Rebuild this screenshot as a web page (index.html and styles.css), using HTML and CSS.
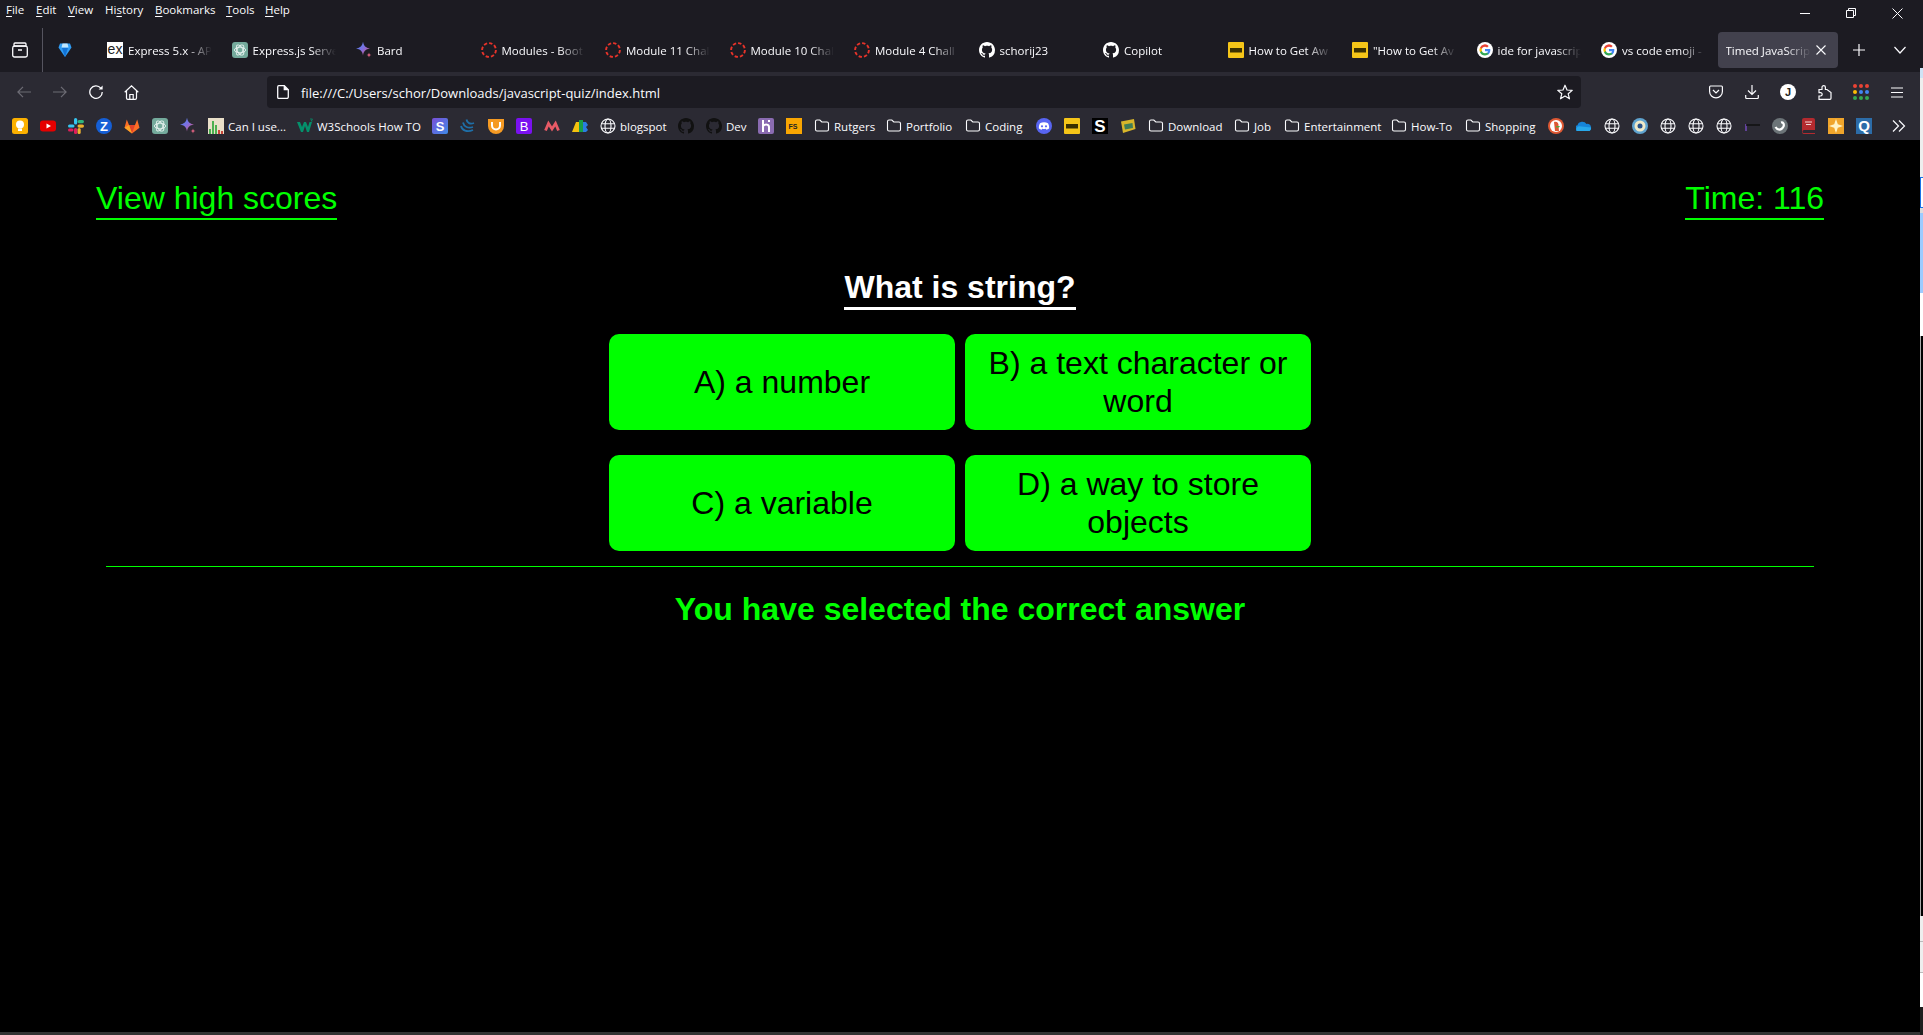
FILE: index.html
```html
<!DOCTYPE html>
<html lang="en">
<head>
<meta charset="utf-8">
<title>Timed JavaScript Quiz</title>
<link rel="stylesheet" href="styles.css">
</head>
<body>
<svg class="defs" width="0" height="0" aria-hidden="true">
  <defs>
    <linearGradient id="bardg" x1="0" y1="0" x2="1" y2="1"><stop offset="0" stop-color="#3f8df5"/><stop offset=".5" stop-color="#7f6fe0"/><stop offset="1" stop-color="#ef4f63"/></linearGradient>
    <linearGradient id="sg" x1="0" y1="0" x2="1" y2="1"><stop offset="0" stop-color="#7a4fd8"/><stop offset="1" stop-color="#3f8be8"/></linearGradient>
    <symbol id="gpt" viewBox="0 0 16 16"><rect width="16" height="16" rx="3" fill="#74aa9c"/><g fill="none" stroke="#e8f3f0" stroke-width=".9"><ellipse cx="8" cy="8" rx="5.600" ry="2.800" transform="rotate(60 8 8)"/><ellipse cx="8" cy="8" rx="5.600" ry="2.800" transform="rotate(-60 8 8)"/><ellipse cx="8" cy="8" rx="5.600" ry="2.800"/></g></symbol>
    <symbol id="bard" viewBox="0 0 16 16"><path d="M7 -.5C7.600 3.800 9.300 5.600 14 6.500 9.300 7.400 7.600 9.200 7 13.500 6.400 9.200 4.700 7.400 0 6.500 4.700 5.600 6.400 3.800 7 -.5Z" fill="url(#bardg)"/><path d="M13 10.500c.3 1.500 1 2.200 2.500 2.500-1.500.3-2.200 1-2.500 2.500-.3-1.500-1-2.200-2.500-2.500 1.500-.3 2.200-1 2.500-2.500Z" fill="#d9607e"/></symbol>
    <symbol id="spin" viewBox="0 0 16 16"><circle cx="8" cy="8" r="6.900" fill="none" stroke="#e5332a" stroke-width="1.900" stroke-dasharray="3.400 2"/></symbol>
    <symbol id="gh" viewBox="0 0 16 16"><path fill-rule="evenodd" d="M8 0C3.580 0 0 3.580 0 8c0 3.540 2.290 6.530 5.470 7.590.4.07.55-.17.55-.38 0-.19-.01-.82-.01-1.490-2.010.37-2.530-.49-2.690-.94-.09-.23-.48-.94-.82-1.130-.28-.15-.68-.52-.01-.53.63-.01 1.080.58 1.230.82.72 1.210 1.870.87 2.330.66.07-.52.28-.87.51-1.070-1.780-.2-3.640-.89-3.640-3.950 0-.87.31-1.590.82-2.150-.08-.2-.36-1.020.08-2.120 0 0 .67-.21 2.200.82.64-.18 1.320-.27 2-.27.68 0 1.360.09 2 .27 1.530-1.040 2.200-.82 2.200-.82.44 1.100.16 1.920.08 2.120.51.56.82 1.270.82 2.150 0 3.070-1.870 3.750-3.650 3.950.29.25.54.73.54 1.480 0 1.070-.01 1.930-.01 2.200 0 .21.15.46.55.38A8.013 8.013 0 0 0 16 8c0-4.420-3.580-8-8-8Z"/></symbol>
    <symbol id="imdb" viewBox="0 0 16 16"><rect width="16" height="16" rx="1" fill="#f5c518"/><rect x="2" y="6" width="12" height="4.500" fill="#3a3000"/></symbol>
    <symbol id="goog" viewBox="0 0 16 16"><circle cx="8" cy="8" r="8" fill="#fff"/><path d="M13.300 8.100c0-.4 0-.8-.1-1.200H8v2.300h3a2.600 2.600 0 0 1-1.100 1.700v1.400h1.800c1-1 1.600-2.400 1.600-4.200Z" fill="#4285f4"/><path d="M8 13.500c1.500 0 2.700-.5 3.700-1.400l-1.800-1.400c-.5.3-1.100.5-1.900.5-1.400 0-2.700-1-3.100-2.300H3v1.400a5.500 5.500 0 0 0 5 3.200Z" fill="#34a853"/><path d="M4.900 8.900a3.300 3.300 0 0 1 0-2.100V5.400H3a5.500 5.500 0 0 0 0 4.900l1.900-1.400Z" fill="#fbbc05"/><path d="M8 4.700c.8 0 1.500.3 2.100.8l1.600-1.600A5.500 5.500 0 0 0 3 5.400l1.900 1.400C5.300 5.600 6.600 4.700 8 4.700Z" fill="#ea4335"/></symbol>
    <symbol id="globe" viewBox="0 0 16 16"><g fill="none" stroke="#fbfbfe" stroke-width="1.100"><circle cx="8" cy="8" r="7"/><ellipse cx="8" cy="8" rx="3" ry="7"/><path d="M1.300 5.800h13.400M1.300 10.200h13.400"/></g></symbol>
    <symbol id="folder" viewBox="0 0 16 16"><path d="M1.500 3.500a1.500 1.500 0 0 1 1.500-1.500h2.800l2 2H13a1.500 1.500 0 0 1 1.500 1.500v6A1.500 1.500 0 0 1 13 13H3a1.500 1.500 0 0 1-1.500-1.500Z" fill="none" stroke="#fbfbfe" stroke-width="1.100"/></symbol>
  </defs>
</svg>

<div class="screen">
  <div class="window">
    <nav class="menubar">
      <span class="menu w-file"><u>F</u>ile</span>
      <span class="menu w-edit"><u>E</u>dit</span>
      <span class="menu w-view"><u>V</u>iew</span>
      <span class="menu w-hist">Hi<u>s</u>tory</span>
      <span class="menu w-book"><u>B</u>ookmarks</span>
      <span class="menu w-tools"><u>T</u>ools</span>
      <span class="menu w-help"><u>H</u>elp</span>
      <div class="winctl">
        <span class="winbtn"><svg width="10" height="10" viewBox="0 0 10 10"><path d="M0 5.500h10" stroke="#fbfbfe"/></svg></span>
        <span class="winbtn"><svg width="10" height="10" viewBox="0 0 10 10" fill="none" stroke="#fbfbfe"><path d="M.5 2.500h7v7h-7zM2.500 2.500v-2h7v7h-2"/></svg></span>
        <span class="winbtn"><svg width="11" height="11" viewBox="0 0 11 11"><path d="M.5.500l10 10M10.500.500l-10 10" stroke="#fbfbfe"/></svg></span>
      </div>
    </nav>

    <div class="tabstrip">
      <span class="fview"><svg width="16" height="16" viewBox="0 0 16 16" fill="none" stroke="#fbfbfe" stroke-width="1.300"><path d="M3 1h10a1 1 0 0 1 1 1v2H2V2a1 1 0 0 1 1-1Z"/><rect x=".7" y="4.200" width="14.600" height="10.800" rx="1.800"/><path d="M6 8h4" stroke-width="1.500"/></svg></span>
      <span class="pinned"><svg width="16" height="16" viewBox="0 0 16 16"><path d="M3 1.500h10L14.500 5.500 8 15 1.500 5.500Z" fill="#2f9df5"/><path d="M5.500 1.500h5L11.500 5.500h-7Z" fill="#bfe6ff"/><path d="M8 15 5 6h6Z" fill="#1272d6"/></svg></span>
      <div class="tab"><svg class="ico" viewBox="0 0 16 16"><rect width="16" height="16" fill="#fff"/><text x="8" y="12" class="t-ex">ex</text></svg><span class="tabtext">Express 5.x - API</span></div>
      <div class="tab"><svg class="ico"><use href="#gpt"/></svg><span class="tabtext">Express.js Serve</span></div>
      <div class="tab"><svg class="ico"><use href="#bard"/></svg><span class="tabtext">Bard</span></div>
      <div class="tab"><svg class="ico"><use href="#spin"/></svg><span class="tabtext">Modules - Boot</span></div>
      <div class="tab"><svg class="ico"><use href="#spin"/></svg><span class="tabtext">Module 11 Chal</span></div>
      <div class="tab"><svg class="ico"><use href="#spin"/></svg><span class="tabtext">Module 10 Chal</span></div>
      <div class="tab"><svg class="ico"><use href="#spin"/></svg><span class="tabtext">Module 4 Chall</span></div>
      <div class="tab"><svg class="ico gh-w"><use href="#gh"/></svg><span class="tabtext">schorij23</span></div>
      <div class="tab"><svg class="ico gh-w"><use href="#gh"/></svg><span class="tabtext">Copilot</span></div>
      <div class="tab"><svg class="ico"><use href="#imdb"/></svg><span class="tabtext">How to Get Aw</span></div>
      <div class="tab"><svg class="ico"><use href="#imdb"/></svg><span class="tabtext">"How to Get Av</span></div>
      <div class="tab"><svg class="ico"><use href="#goog"/></svg><span class="tabtext">ide for javascrip</span></div>
      <div class="tab"><svg class="ico"><use href="#goog"/></svg><span class="tabtext">vs code emoji -</span></div>
      <div class="tab tab-active"><span class="tabtext">Timed JavaScript</span><svg class="tabclose" width="10" height="10" viewBox="0 0 10 10"><path d="M.5.500l9 9M9.500.500l-9 9" stroke="#fbfbfe" stroke-width="1.100"/></svg></div>
      <svg class="newtab" width="12" height="12" viewBox="0 0 12 12"><path d="M6 0v12M0 6h12" stroke="#fbfbfe" stroke-width="1.200"/></svg>
      <svg class="alltabs" width="12" height="8" viewBox="0 0 12 8"><path d="M.5 1 6 7l5.500-6" fill="none" stroke="#fbfbfe" stroke-width="1.200"/></svg>
    </div>

    <div class="toolbar">
      <svg class="tb tb-back" width="14" height="12" viewBox="0 0 14 12" fill="none" stroke="#6d6c75" stroke-width="1.200"><path d="M14 6H1M6 .8.900 6 6 11.200"/></svg>
      <svg class="tb tb-fwd" width="14" height="12" viewBox="0 0 14 12" fill="none" stroke="#6d6c75" stroke-width="1.200"><path d="M0 6h13M8 .8 13.100 6 8 11.200"/></svg>
      <svg class="tb tb-reload" width="14" height="14" viewBox="0 0 14 14" fill="none" stroke="#fbfbfe" stroke-width="1.300"><path d="M11.800 3.200A6.200 6.200 0 1 0 13.200 7"/><path d="M13.600.6v4h-4Z" fill="#fbfbfe" stroke="none"/></svg>
      <svg class="tb tb-home" width="15" height="15" viewBox="0 0 15 15" fill="none" stroke="#fbfbfe" stroke-width="1.200"><path d="M.7 7.200 7.500.8l6.800 6.400M2.500 6v7a1.300 1.300 0 0 0 1.300 1.300h7.400a1.300 1.300 0 0 0 1.300-1.300V6M5.800 14.200V9.500h3.400v4.700"/></svg>
      <div class="urlbar">
        <svg class="urlicon" width="12" height="14" viewBox="0 0 12 14" fill="none" stroke="#fbfbfe" stroke-width="1.300"><path d="M1.800.7h5.500l4 4v7.400a1.300 1.300 0 0 1-1.300 1.300H1.800A1.200 1.200 0 0 1 .7 12.100V1.900A1.200 1.200 0 0 1 1.800.7Z"/><path d="M7.300.7v4h4" fill="#fbfbfe"/></svg>
        <span class="url">file:///C:/Users/schor/Downloads/javascript-quiz/index.html</span>
        <svg class="star" width="16" height="16" viewBox="0 0 16 16"><path d="M8 1.200 10 6l5.200.4-4 3.400 1.300 5L8 12.100 3.500 14.800l1.300-5-4-3.400L6 6Z" fill="none" stroke="#fbfbfe" stroke-width="1.200" stroke-linejoin="round"/></svg>
      </div>
      <div class="tbright">
        <svg width="14" height="14" viewBox="0 0 14 14" fill="none" stroke="#fbfbfe" stroke-width="1.200"><path d="M1.500 1h11a1 1 0 0 1 .9 1v4.500a6.400 6.400 0 0 1-12.800 0V2a1 1 0 0 1 .9-1Z"/><path d="M4 5l3 3 3-3"/></svg>
        <svg width="14" height="14" viewBox="0 0 14 14" fill="none" stroke="#fbfbfe" stroke-width="1.200"><path d="M7 0v9.500M3 5.500l4 4 4-4M.7 10v2.500a1 1 0 0 0 1 1h10.600a1 1 0 0 0 1-1V10"/></svg>
        <svg width="16" height="16" viewBox="0 0 16 16"><circle cx="8" cy="8" r="8" fill="#fff"/><text x="8" y="12" class="t-j">J</text></svg>
        <svg width="14" height="15" viewBox="0 0 14 15" fill="none" stroke="#fbfbfe" stroke-width="1.200"><path d="M1 14.300V11h1.500a1.700 1.700 0 0 0 0-3.400H1V4.500h3V2.300a1.700 1.700 0 0 1 3.400 0v2.200H9l4 3v5.800a1 1 0 0 1-1 1Z"/></svg>
        <svg width="16" height="16" viewBox="0 0 16 16"><g fill="#ea4335"><circle cx="2" cy="2" r="2"/><circle cx="8" cy="2" r="2"/><circle cx="14" cy="2" r="2"/></g><circle cx="2" cy="8" r="2" fill="#fbbc05"/><circle cx="8" cy="8" r="2" fill="#4285f4"/><circle cx="14" cy="8" r="2" fill="#4285f4"/><g fill="#34a853"><circle cx="2" cy="14" r="2"/><circle cx="8" cy="14" r="2"/><circle cx="14" cy="14" r="2"/></g></svg>
        <svg width="12" height="11" viewBox="0 0 12 11" stroke="#fbfbfe" stroke-width="1.200"><path d="M0 1h12M0 5.500h12M0 10h12"/></svg>
      </div>
    </div>

    <div class="bookmarks">
      <svg class="ico" viewBox="0 0 16 16"><rect width="16" height="16" rx="2.500" fill="#fbb000"/><circle cx="8" cy="6.500" r="4" fill="#fff"/><rect x="6" y="10.500" width="4" height="2.500" fill="#fff"/></svg>
      <svg class="ico" viewBox="0 0 16 16"><rect y="2.500" width="16" height="11" rx="3" fill="#e60000"/><path d="M6.500 5.500v5L11 8Z" fill="#fff"/></svg>
      <svg class="ico" viewBox="0 0 16 16"><rect x="6" y="0" width="3.200" height="6.500" rx="1.600" fill="#36c5f0"/><rect y="6.500" width="6.500" height="3" rx="1.500" fill="#36c5f0"/><rect x="9.500" y="2" width="6.500" height="3.200" rx="1.600" fill="#2eb67d"/><rect x="9.500" y="6.500" width="6.500" height="3.200" rx="1.600" fill="#ecb22e"/><rect x="9.500" y="10" width="3.200" height="6" rx="1.600" fill="#ecb22e"/><rect x="6" y="10" width="3.200" height="6" rx="1.600" fill="#e01e5a"/><rect y="10.500" width="5.500" height="3" rx="1.500" fill="#e01e5a"/></svg>
      <svg class="ico" viewBox="0 0 16 16"><circle cx="8" cy="8" r="8" fill="#155fd6"/><text x="8" y="12.500" class="t-z">Z</text></svg>
      <svg class="ico" viewBox="0 0 16 16"><path d="M8 15.500 .5 9.800 2.800 1.500 5 7h6l2.200-5.500 2.300 8.300Z" fill="#fc6d26"/><path d="M8 15.500 5 7h6Z" fill="#e24329"/><path d="M.5 9.800 5 7l3 8.500Z" fill="#fca326"/></svg>
      <svg class="ico"><use href="#gpt"/></svg>
      <svg class="ico"><use href="#bard"/></svg>
      <span class="bm w-caniuse"><svg class="ico" viewBox="0 0 16 16"><rect width="16" height="16" fill="#e9dfc9"/><path d="M1 16v-5h2v5zM4 16V3h2v13zM7 16V7h2v9z" fill="#4caf50"/><path d="M10 16v-4h2v4zM13 16v-3h2v3z" fill="#c8453a"/></svg><span>Can I use...</span></span>
      <span class="bm w-w3"><svg class="ico" viewBox="0 0 16 16"><path d="M0 4h3l2 5 2-5h2l2 5 1.500-5H15L12 14h-2L8 8l-2 6H4Z" fill="#04906b"/><path d="M13 1h2.500L14 3h1.500" fill="none" stroke="#04906b" stroke-width=".8"/></svg><span>W3Schools How TO</span></span>
      <svg class="ico" viewBox="0 0 16 16"><rect width="16" height="16" rx="2" fill="url(#sg)"/><text x="8" y="12.500" class="t-z">S</text></svg>
      <svg class="ico" viewBox="0 0 16 16" fill="none" stroke="#1f6fa8" stroke-width="1.800"><path d="M1 8c1 4.500 6 6.500 12 4M3 4.500c1 4.500 5 6 10 4.500M6.500 1.500C7 5 10 6.500 14 5"/></svg>
      <svg class="ico" viewBox="0 0 16 16"><path d="M0 1h16v7a8 8 0 0 1-16 0Z" fill="#f59a23"/><path d="M4 4v3.500a4 4 0 0 0 8 0V4" fill="none" stroke="#fff" stroke-width="2"/></svg>
      <svg class="ico" viewBox="0 0 16 16"><rect width="16" height="16" rx="2" fill="#7a11f0"/><text x="8" y="12.500" class="t-b">B</text></svg>
      <svg class="ico" viewBox="0 0 16 16"><path d="M1.500 12.500 4.500 5.500 8 11 11.500 5.500 14.500 12.500" fill="none" stroke="#e85a66" stroke-width="2.800"/></svg>
      <svg class="ico" viewBox="0 0 16 16"><path d="M0 14 4 4h3v10Z" fill="#f4c20d"/><rect x="7" y="2" width="4" height="12" fill="#1a9e46"/><path d="M11 4h3l2 3-2 2 2 3-2 2h-3Z" fill="#2a7de1"/></svg>
      <span class="bm w-blog"><svg class="ico"><use href="#globe"/></svg><span>blogspot</span></span>
      <svg class="ico gh-d"><use href="#gh"/></svg>
      <span class="bm w-dev"><svg class="ico gh-d"><use href="#gh"/></svg><span>Dev</span></span>
      <svg class="ico" viewBox="0 0 16 16"><rect width="16" height="16" rx="2" fill="#8a6bb1"/><path d="M5 2v12M5 8c2-2 6-2 6 1v5M11 2v2" fill="none" stroke="#fff" stroke-width="2"/></svg>
      <svg class="ico" viewBox="0 0 16 16"><rect width="16" height="16" fill="#f9a602"/><text x="7" y="11" class="t-fs">FS</text></svg>
      <span class="bm w-rut"><svg class="ico"><use href="#folder"/></svg><span>Rutgers</span></span>
      <span class="bm w-port"><svg class="ico"><use href="#folder"/></svg><span>Portfolio</span></span>
      <span class="bm w-cod"><svg class="ico"><use href="#folder"/></svg><span>Coding</span></span>
      <svg class="ico" viewBox="0 0 16 16"><circle cx="8" cy="8" r="8" fill="#5865f2"/><path d="M4 5.200c2.600-1.200 5.400-1.200 8 0 .9 1.700 1.300 3.500 1.100 5.300-1 .7-1.900 1-2.700 1.200l-.6-1c-1.200.3-2.400.3-3.600 0l-.6 1c-.9-.2-1.800-.5-2.700-1.200C2.700 8.700 3.100 6.900 4 5.200Z" fill="#fff"/><circle cx="6" cy="8.300" r="1.100" fill="#5865f2"/><circle cx="10" cy="8.300" r="1.100" fill="#5865f2"/></svg>
      <svg class="ico"><use href="#imdb"/></svg>
      <svg class="ico" viewBox="0 0 16 16"><rect width="16" height="16" fill="#000"/><text x="8" y="13.500" class="t-bs">S</text></svg>
      <svg class="ico" viewBox="0 0 16 16"><path d="M1 3.500 14 1l1.500 10L3 15Z" fill="#d8b62a"/><path d="M4 6.500 12.500 5l.5 5L5 11.500Z" fill="#3f7d58"/></svg>
      <span class="bm w-down"><svg class="ico"><use href="#folder"/></svg><span>Download</span></span>
      <span class="bm w-job"><svg class="ico"><use href="#folder"/></svg><span>Job</span></span>
      <span class="bm w-ent"><svg class="ico"><use href="#folder"/></svg><span>Entertainment</span></span>
      <span class="bm w-how"><svg class="ico"><use href="#folder"/></svg><span>How-To</span></span>
      <span class="bm w-shop"><svg class="ico"><use href="#folder"/></svg><span>Shopping</span></span>
      <svg class="ico" viewBox="0 0 16 16"><circle cx="8" cy="8" r="8" fill="#de5833"/><circle cx="8" cy="8" r="6" fill="#fff"/><path d="M6 4c3-1 5 1 4.500 4l.5 5H7Z" fill="#de5833"/><path d="M8 8h4l-1 1.500H8Z" fill="#5ca33b"/></svg>
      <svg class="ico" viewBox="0 0 16 16"><path d="M1 13a3 3 0 0 1 .5-5.800A5 5 0 0 1 10.500 6 3.500 3.500 0 0 1 15 9.500 3.500 3.500 0 0 1 13.500 13Z" fill="#1684d8"/><path d="M1 13a3 3 0 0 1 2-4.800L15 9.500A3.500 3.500 0 0 1 13.500 13Z" fill="#28a8ea"/></svg>
      <svg class="ico"><use href="#globe"/></svg>
      <svg class="ico" viewBox="0 0 16 16"><circle cx="8" cy="8" r="8" fill="#5fa3cf"/><circle cx="8" cy="8" r="5.500" fill="#efe9c8"/><circle cx="8" cy="8" r="2.500" fill="#28528a"/></svg>
      <svg class="ico"><use href="#globe"/></svg>
      <svg class="ico"><use href="#globe"/></svg>
      <svg class="ico"><use href="#globe"/></svg>
      <svg class="ico" viewBox="0 0 16 16"><path d="M2 6v7" stroke="#7d4fd0" stroke-width="1.300"/><path d="M2 7h14" stroke="#111" stroke-width="1.500"/></svg>
      <svg class="ico" viewBox="0 0 16 16"><circle cx="8" cy="8" r="8" fill="#6c7478"/><path d="M3.500 9c2 3.500 6 3.500 8-.5C12.500 6 11 4 9 4.500" fill="none" stroke="#fff" stroke-width="2.200"/></svg>
      <svg class="ico" viewBox="0 0 16 16"><path d="M2 2a2 2 0 0 1 2-2h9a2 2 0 0 1 2 2v10H4a1.500 1.500 0 0 0 0 3h11v1H3.500A2 2 0 0 1 2 14Z" fill="#b32a2f"/><path d="M5 4h7M6 6.500h5" stroke="#f1d6d6" stroke-width="1.100"/></svg>
      <svg class="ico" viewBox="0 0 16 16"><rect width="16" height="16" fill="#f0a52b"/><path d="M8 1l1.800 5.200L15 8l-5.200 1.800L8 15 6.200 9.800 1 8l5.200-1.800Z" fill="#fff3c4"/></svg>
      <svg class="ico" viewBox="0 0 16 16"><rect width="16" height="16" fill="#2c6ca8"/><text x="8" y="12.800" class="t-q">Q</text></svg>
      <svg class="more" width="14" height="12" viewBox="0 0 14 12" fill="none" stroke="#fbfbfe" stroke-width="1.200"><path d="M1 .5 6.500 6 1 11.500M7 .5 12.500 6 7 11.500"/></svg>
    </div>

    <main class="page">
      <header class="topline">
        <a class="toplink">View high scores</a>
        <a class="toplink">Time: 116</a>
      </header>
      <section class="quiz">
        <h1 class="question">What is string?</h1>
        <div class="answers">
          <button class="answer">A) a number</button>
          <button class="answer">B) a text character or word</button>
          <button class="answer">C) a variable</button>
          <button class="answer">D) a way to store objects</button>
        </div>
        <div class="rule"></div>
        <p class="result">You have selected the correct answer</p>
      </section>
    </main>
  </div>

  <aside class="edge">
    <div class="e-top"></div>
    <div class="e-tint"></div>
    <div class="e-light"></div>
    <div class="e-blue"></div>
    <div class="e-gap"></div>
    <div class="e-sky"></div>
    <div class="e-white"></div>
    <div class="e-black"></div>
    <div class="e-row1"></div>
    <div class="e-row2"></div>
    <div class="e-white2"></div>
    <div class="e-bottom"></div>
  </aside>
</div>
</body>
</html>
```

FILE: styles.css
```css
* { box-sizing: border-box; }
html, body { margin: 0; height: 100%; overflow: hidden; background: #000; }
body { font-family: "Open Sans", "Liberation Sans", sans-serif; color: #fbfbfe; }
.defs { position: absolute; }
.screen { display: flex; height: 1035px; width: 1923px; }
.window { width: 1920px; display: flex; flex-direction: column; flex: none; }

/* menu bar */
.menubar { height: 28px; background: #1c1b22; display: flex; align-items: flex-start; padding: 1px 0 0 6px; gap: 12px; font-size: 11.5px; line-height: 17px; flex: none; }
.menu { display: block; }
.menu u { text-underline-offset: 2px; text-decoration-thickness: 1px; }
.w-file { width: 18px; } .w-edit { width: 20px; } .w-view { width: 25px; } .w-hist { width: 38px; }
.w-book { width: 59px; } .w-tools { width: 27px; } .w-help { width: 25px; }
.winctl { margin-left: auto; display: flex; margin-top: -2px; }
.winbtn { width: 46px; height: 28px; display: flex; align-items: center; justify-content: center; }

/* tabs */
.tabstrip { height: 44px; background: #1c1b22; display: flex; align-items: center; flex: none; position: relative; font-size: 11.5px; }
.fview { width: 43px; height: 44px; border-right: 1px solid #55545f; display: flex; align-items: center; justify-content: center; padding-right: 2px; flex: none; }
.pinned { margin-left: 14px; margin-right: 26px; width: 16px; height: 16px; flex: none; }
.pinned svg { display: block; }
.ico { width: 16px; height: 16px; flex: none; display: block; }
.gh-w { fill: #fff; }
.gh-d { fill: #111; }
.tab { width: 120.5px; margin-right: 4px; height: 36px; padding: 0 8px; display: flex; align-items: center; gap: 5px; flex: none; border-radius: 4px; }
.tabtext { flex: 1; min-width: 0; overflow: hidden; white-space: nowrap; -webkit-mask-image: linear-gradient(to right, #000 70%, transparent 100%); mask-image: linear-gradient(to right, #000 70%, transparent 100%); }
.tab-active { background: #42414d; }
.tabclose { flex: none; margin-right: 4px; }
.newtab { margin-left: 11px; flex: none; }
.alltabs { margin-left: 29px; flex: none; }

/* toolbar */
.toolbar { height: 36px; background: #2b2a33; display: flex; align-items: center; padding-top: 4px; flex: none; }
.tb { flex: none; display: block; }
.tb-back { margin-left: 17px; }
.tb-fwd { margin-left: 22px; }
.tb-reload { margin-left: 22px; }
.tb-home { margin-left: 21px; }
.urlbar { margin-left: 128px; width: 1314px; height: 32px; background: #1c1b22; border-radius: 4px; display: flex; align-items: center; padding: 0 8px 0 10px; flex: none; }
.urlicon { flex: none; }
.url { margin-left: 12px; padding-top: 2px; font-size: 13px; flex: 1; white-space: nowrap; }
.star { flex: none; }
.tbright { display: flex; align-items: center; margin-left: 128px; }
.tbright svg { flex: none; display: block; }
.tbright svg:nth-child(1) { margin-right: 22px; }
.tbright svg:nth-child(2) { margin-right: 21px; }
.tbright svg:nth-child(3) { margin-right: 22px; }
.tbright svg:nth-child(4) { margin-right: 21px; }
.tbright svg:nth-child(5) { margin-right: 22px; }

/* bookmarks */
.bookmarks { height: 32px; background: #2b2a33; display: flex; align-items: center; gap: 12px; padding: 4px 0 0 12px; font-size: 11.5px; flex: none; }
.bm { display: flex; align-items: center; gap: 4px; flex: none; white-space: nowrap; }
.bm span { display: block; flex: none; }
.w-caniuse { width: 77px; } .w-w3 { width: 123px; } .w-blog { width: 66px; } .w-dev { width: 40px; }
.w-rut { width: 60px; } .w-port { width: 67px; } .w-cod { width: 59px; } .w-down { width: 74px; }
.w-job { width: 38px; } .w-ent { width: 95px; } .w-how { width: 62px; } .w-shop { width: 71px; }
.more { margin-left: 8px; flex: none; }

.t-ex { font: 14px "Liberation Sans", sans-serif; fill: #222; text-anchor: middle; }
.t-j { font: bold 11px "Liberation Sans", sans-serif; fill: #222; text-anchor: middle; }
.t-z { font: bold 13px "Liberation Sans", sans-serif; fill: #fff; text-anchor: middle; }
.t-bs { font: bold 17px "Liberation Sans", sans-serif; fill: #fff; text-anchor: middle; }
.t-b { font: 13px "Liberation Sans", sans-serif; fill: #fff; text-anchor: middle; }
.t-fs { font: bold 7px "Liberation Sans", sans-serif; fill: #222; text-anchor: middle; }
.t-q { font: bold 15px "Liberation Sans", sans-serif; fill: #fff; text-anchor: middle; }

/* page */
.page { flex: 1; background: #000; font-family: "Liberation Sans", Arial, sans-serif; border-bottom: 3px solid #333; min-height: 0; }
.topline { display: flex; justify-content: space-between; align-items: flex-start; padding: 40px 96px 0; }
.toplink { display: block; font-size: 32px; line-height: 37px; padding-bottom: 1px; color: #0f0; border-bottom: 2px solid #0f0; }
.quiz { display: flex; flex-direction: column; align-items: center; }
.question { margin: 50px 0 24px; font-size: 32px; line-height: 35px; padding-bottom: 2px; font-weight: 700; color: #fff; border-bottom: 3px solid #fff; }
.answers { display: grid; grid-template-columns: 346px 346px; grid-auto-rows: 96px; gap: 25px 10px; }
.answer { border: 0; border-radius: 10px; background: #0f0; color: #000; font: 32px/38px "Liberation Sans", Arial, sans-serif; padding: 0 20px; text-align: center; }
.rule { width: 1708px; height: 1px; background: #0f0; margin-top: 15px; }
.result { margin: 24px 0 0; font-size: 32px; line-height: 37px; font-weight: 700; color: #0f0; }

/* desktop behind the window, visible down the right edge */
.edge { width: 3px; flex: none; display: flex; flex-direction: column; height: 1035px; }
.e-top { height: 68px; background: #1c1b22; }
.e-tint { height: 10px; background: #cfe3f5; }
.e-light { height: 99px; background: #eee; }
.e-blue { height: 31px; background: #fff; border: 1px solid #1a73e8; border-width: 1px 0 1px 1px; }
.e-gap { height: 5px; background: #ddd; }
.e-sky { height: 80px; background: #9ccbff; }
.e-white { height: 43px; background: #fff; }
.e-black { height: 580px; background: #000; border-left: 1px solid #aaa; }
.e-row1 { height: 26px; background: #eee; border-bottom: 1px solid #bbb; }
.e-row2 { height: 31px; background: #eee; border-bottom: 1px solid #bbb; }
.e-white2 { height: 34px; background: #fff; }
.e-bottom { flex: 1; background: #1e1e1e; }
```
